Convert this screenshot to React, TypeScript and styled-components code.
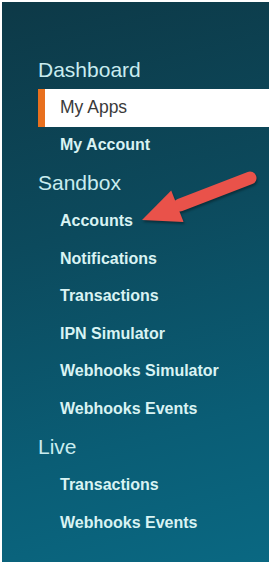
import styled, { createGlobalStyle } from 'styled-components'

const GlobalStyle = createGlobalStyle`
  html, body {
    margin: 0;
    padding: 0;
    background: #ffffff;
  }
  body {
    font-family: "Liberation Sans", Arial, sans-serif;
  }
`

type Section = { title: string; items: string[] }

const sections: Section[] = [
  { title: 'Dashboard', items: ['My Apps', 'My Account'] },
  {
    title: 'Sandbox',
    items: [
      'Accounts',
      'Notifications',
      'Transactions',
      'IPN Simulator',
      'Webhooks Simulator',
      'Webhooks Events',
    ],
  },
  { title: 'Live', items: ['Transactions', 'Webhooks Events'] },
]

const Frame = styled.div`
  width: 272px;
  height: 565px;
  box-sizing: border-box;
  padding: 2px 3px 3px 2px;
  background: #ffffff;
`

const Panel = styled.nav`
  position: relative;
  height: 100%;
  box-sizing: border-box;
  padding: 49px 0 0 36px;
  background: linear-gradient(165deg, #0d3947 0%, #0c4a5d 40%, #0a5d75 75%, #0a6882 100%);
  display: flex;
  flex-direction: column;
`

const Heading = styled.div<{ $first?: boolean }>`
  height: 38px;
  margin-top: ${(p) => (p.$first ? '0' : '0.5px')};
  padding-bottom: 1px;
  box-sizing: border-box;
  display: flex;
  align-items: center;
  font-size: 21px;
  color: #c9ecef;
`

const Item = styled.div<{ $active?: boolean }>`
  height: 37.6px;
  display: flex;
  align-items: center;
  box-sizing: border-box;
  padding-left: ${(p) => (p.$active ? '15px' : '22px')};
  padding-bottom: ${(p) => (p.$active ? '0' : '1px')};
  border-left: ${(p) => (p.$active ? '7px solid #e8701e' : 'none')};
  background: ${(p) => (p.$active ? '#ffffff' : 'transparent')};
  color: ${(p) => (p.$active ? '#3a3a3a' : '#d9f3f3')};
  font-size: ${(p) => (p.$active ? '17.5px' : '16px')};
  font-weight: ${(p) => (p.$active ? 400 : 700)};
`

const Arrow = styled.svg`
  position: absolute;
  left: 128px;
  top: 158px;
  width: 135px;
  height: 75px;
  overflow: visible;
  filter: drop-shadow(1px 2px 1px rgba(0, 0, 0, 0.35));
`

export default function App() {
  return (
    <>
      <GlobalStyle />
      <Frame>
        <Panel>
          {sections.map((s, i) => (
            <div key={s.title}>
              <Heading $first={i === 0}>{s.title}</Heading>
              {s.items.map((item) => (
                <Item key={item} $active={item === 'My Apps'}>
                  {item}
                </Item>
              ))}
            </div>
          ))}
          <Arrow viewBox="0 0 135 75">
            <line
              x1="120"
              y1="18"
              x2="50"
              y2="45"
              stroke="#e9524a"
              strokeWidth="13"
              strokeLinecap="round"
            />
            <polygon points="12,60 41.2,30.4 53.6,62" fill="#e9524a" />
          </Arrow>
        </Panel>
      </Frame>
    </>
  )
}
